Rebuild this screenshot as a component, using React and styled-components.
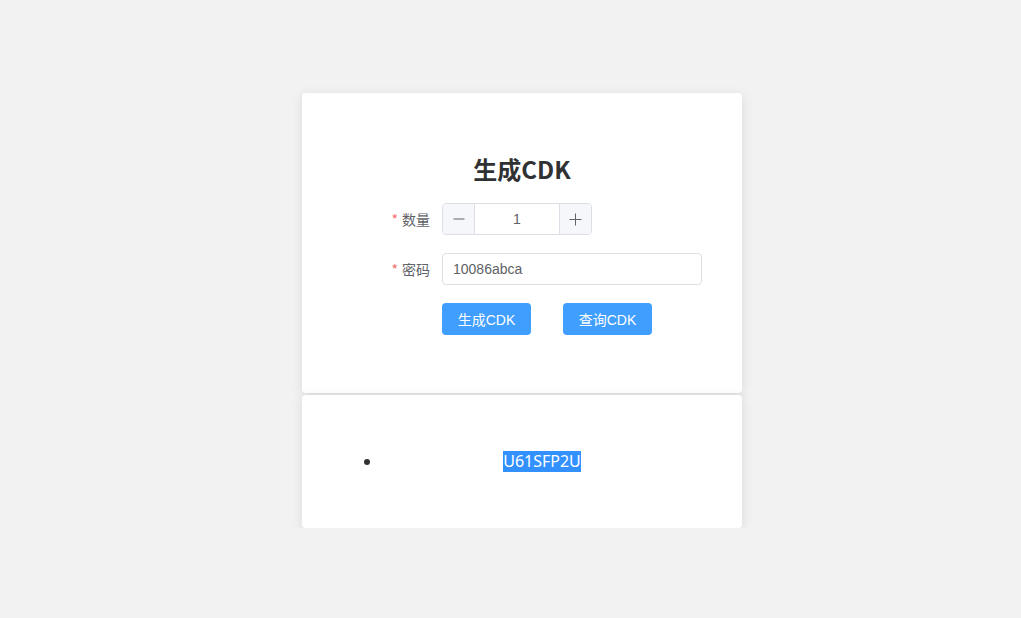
import React from "react";
import styled, { createGlobalStyle } from "styled-components";

const Global = createGlobalStyle`
  html, body { margin: 0; padding: 0; background: #f2f2f2; }
  body { font-family: "Liberation Sans", "Noto Sans CJK SC", sans-serif; }
  * { box-sizing: border-box; }
`;

const Page = styled.div`
  padding: 93px 0 0 302px;
  display: flex;
  flex-direction: column;
  gap: 2px;
`;

const Card = styled.div`
  width: 440px;
  height: ${(p) => p.$h}px;
  background: #fff;
  border-radius: 4px;
  box-shadow: 0 2px 12px 0 rgba(0, 0, 0, 0.1);
`;

const FormCard = styled(Card)`
  padding: 60px 40px 0 60px;
`;

const Title = styled.h2`
  margin: 0 0 18px 0;
  padding-right: 20px;
  font-size: 24px;
  line-height: 32px;
  font-weight: bold;
  color: #303133;
  text-align: center;
  font-family: "Noto Sans CJK SC", "Liberation Sans", sans-serif;
`;

const Row = styled.div`
  display: flex;
  align-items: center;
  height: 32px;
  margin-bottom: 18px;
`;

const Label = styled.label`
  width: 80px;
  padding-right: 12px;
  text-align: right;
  font-size: 14px;
  color: #606266;
  font-family: "Noto Sans CJK SC", "Liberation Sans", sans-serif;
  &::before {
    content: "*";
    color: #f56c6c;
    margin-right: 4px;
  }
`;

const NumberBox = styled.div`
  width: 150px;
  height: 32px;
  display: flex;
  border: 1px solid #dcdfe6;
  border-radius: 4px;
  overflow: hidden;
`;

const StepButton = styled.span`
  width: 32px;
  display: flex;
  align-items: center;
  justify-content: center;
  background: #f5f7fa;
  color: #606266;
  ${(p) => (p.$side === "left" ? "border-right: 1px solid #dcdfe6;" : "border-left: 1px solid #dcdfe6;")}
`;

const NumberValue = styled.span`
  flex: 1;
  display: flex;
  align-items: center;
  justify-content: center;
  font-size: 14px;
  color: #606266;
`;

const TextInput = styled.div`
  width: 260px;
  height: 32px;
  border: 1px solid #dcdfe6;
  border-radius: 4px;
  padding: 0 10px;
  display: flex;
  align-items: center;
  font-size: 14px;
  color: #606266;
`;

const Buttons = styled.div`
  display: flex;
  gap: 32px;
  padding-left: 80px;
`;

const Button = styled.button`
  height: 32px;
  width: 89px;
  padding: 0;
  border: none;
  border-radius: 4px;
  background: #409eff;
  color: #fff;
  font-size: 14px;
  font-family: "Liberation Sans", "Noto Sans CJK SC", sans-serif;
`;

const ResultCard = styled(Card)`
  padding: 0 40px;
  display: flex;
  align-items: center;
`;

const List = styled.ul`
  margin: 0;
  padding-left: 40px;
  width: 100%;
  color: #303133;
`;

const Item = styled.li`
  text-align: center;
  font-size: 16px;
  font-family: "Noto Sans", "Liberation Sans", sans-serif;
  line-height: 21px;
`;

const Selected = styled.span`
  background: #3390ff;
  color: #fff;
  display: inline-block;
  line-height: 21px;
`;

const Minus = () => (
  <svg width="12" height="12" viewBox="0 0 12 12">
    <path d="M0.5 6H11.5" stroke="#606266" strokeWidth="1" />
  </svg>
);
const Plus = () => (
  <svg width="13" height="13" viewBox="0 0 13 13">
    <path d="M0.5 6.5H12.5M6.5 0.5V12.5" stroke="#606266" strokeWidth="1" />
  </svg>
);

export default function App() {
  return (
    <>
      <Global />
      <Page>
        <FormCard $h={300}>
          <Title>生成CDK</Title>
          <Row>
            <Label>数量</Label>
            <NumberBox>
              <StepButton $side="left"><Minus /></StepButton>
              <NumberValue>1</NumberValue>
              <StepButton $side="right"><Plus /></StepButton>
            </NumberBox>
          </Row>
          <Row>
            <Label>密码</Label>
            <TextInput>10086abca</TextInput>
          </Row>
          <Buttons>
            <Button>生成CDK</Button>
            <Button>查询CDK</Button>
          </Buttons>
        </FormCard>
        <ResultCard $h={133}>
          <List>
            <Item><Selected>U61SFP2U</Selected></Item>
          </List>
        </ResultCard>
      </Page>
    </>
  );
}
